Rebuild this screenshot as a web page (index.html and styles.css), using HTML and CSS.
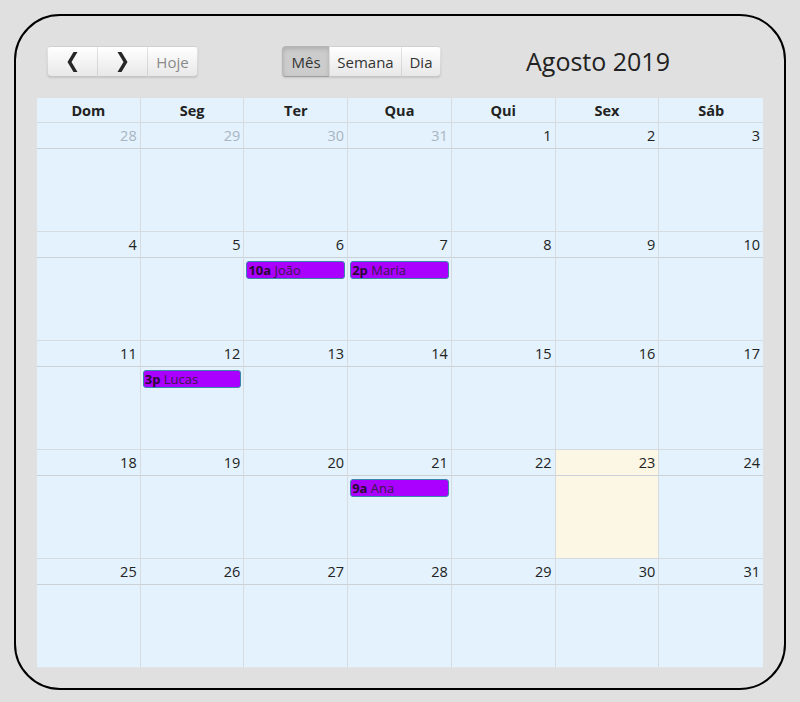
FILE: index.html
```html
<!DOCTYPE html>
<html lang="pt">
<head>
<meta charset="utf-8">
<title>Calendário</title>
<link rel="stylesheet" href="styles.css">
</head>
<body>
<div class="frame">
  <div class="toolbar">
    <div class="btn-group nav-group">
      <button class="btn btn-icon" aria-label="Anterior">
        <svg width="11" height="20" viewBox="0 0 11 20"><polygon points="10.5,0 4.5,10 10.5,20 6.5,20 0.5,10 6.5,0" fill="#262626"/></svg>
      </button>
      <button class="btn btn-icon" aria-label="Próximo">
        <svg width="11" height="20" viewBox="0 0 11 20"><polygon points="0.5,0 6.5,10 0.5,20 4.5,20 10.5,10 4.5,0" fill="#262626"/></svg>
      </button>
      <button class="btn btn-text disabled">Hoje</button>
    </div>
    <div class="btn-group view-group">
      <button class="btn btn-text active">Mês</button>
      <button class="btn btn-text">Semana</button>
      <button class="btn btn-text">Dia</button>
    </div>
    <h2 class="title">Agosto 2019</h2>
  </div>

  <div class="calendar">
    <div class="head">
      <div class="hcell">Dom</div><div class="hcell">Seg</div><div class="hcell">Ter</div><div class="hcell">Qua</div><div class="hcell">Qui</div><div class="hcell">Sex</div><div class="hcell">Sáb</div>
    </div>

    <div class="week">
      <div class="day other"><div class="num">28</div><div class="body"></div></div>
      <div class="day other"><div class="num">29</div><div class="body"></div></div>
      <div class="day other"><div class="num">30</div><div class="body"></div></div>
      <div class="day other"><div class="num">31</div><div class="body"></div></div>
      <div class="day"><div class="num">1</div><div class="body"></div></div>
      <div class="day"><div class="num">2</div><div class="body"></div></div>
      <div class="day"><div class="num">3</div><div class="body"></div></div>
    </div>

    <div class="week">
      <div class="day"><div class="num">4</div><div class="body"></div></div>
      <div class="day"><div class="num">5</div><div class="body"></div></div>
      <div class="day"><div class="num">6</div><div class="body"><div class="event"><b>10a</b> João</div></div></div>
      <div class="day"><div class="num">7</div><div class="body"><div class="event"><b>2p</b> Maria</div></div></div>
      <div class="day"><div class="num">8</div><div class="body"></div></div>
      <div class="day"><div class="num">9</div><div class="body"></div></div>
      <div class="day"><div class="num">10</div><div class="body"></div></div>
    </div>

    <div class="week">
      <div class="day"><div class="num">11</div><div class="body"></div></div>
      <div class="day"><div class="num">12</div><div class="body"><div class="event"><b>3p</b> Lucas</div></div></div>
      <div class="day"><div class="num">13</div><div class="body"></div></div>
      <div class="day"><div class="num">14</div><div class="body"></div></div>
      <div class="day"><div class="num">15</div><div class="body"></div></div>
      <div class="day"><div class="num">16</div><div class="body"></div></div>
      <div class="day"><div class="num">17</div><div class="body"></div></div>
    </div>

    <div class="week">
      <div class="day"><div class="num">18</div><div class="body"></div></div>
      <div class="day"><div class="num">19</div><div class="body"></div></div>
      <div class="day"><div class="num">20</div><div class="body"></div></div>
      <div class="day"><div class="num">21</div><div class="body"><div class="event"><b>9a</b> Ana</div></div></div>
      <div class="day"><div class="num">22</div><div class="body"></div></div>
      <div class="day today"><div class="num">23</div><div class="body"></div></div>
      <div class="day"><div class="num">24</div><div class="body"></div></div>
    </div>

    <div class="week last">
      <div class="day"><div class="num">25</div><div class="body"></div></div>
      <div class="day"><div class="num">26</div><div class="body"></div></div>
      <div class="day"><div class="num">27</div><div class="body"></div></div>
      <div class="day"><div class="num">28</div><div class="body"></div></div>
      <div class="day"><div class="num">29</div><div class="body"></div></div>
      <div class="day"><div class="num">30</div><div class="body"></div></div>
      <div class="day"><div class="num">31</div><div class="body"></div></div>
    </div>
  </div>
</div>
</body>
</html>
```

FILE: styles.css
```css
* { box-sizing: border-box; }

html, body {
  margin: 0;
  padding: 0;
  background: #e0e0e0;
}

body {
  font-family: "Open Sans", "Noto Sans", sans-serif;
  font-size: 15px;
  color: #222;
}

.frame {
  margin: 14px;
  width: 772px;
  height: 676px;
  border: 2px solid #000;
  border-radius: 46px;
  padding: 30px 21px 21px 21px;
}

.toolbar {
  display: flex;
  align-items: center;
  height: 31px;
  margin-bottom: 21px;
  padding-left: 10px;
}

.btn-group {
  display: flex;
  height: 31px;
  border-radius: 4px;
  box-shadow: 0 1px 2px rgba(0, 0, 0, 0.12);
}

.view-group { margin-left: 84px; }

.btn {
  height: 31px;
  margin: 0;
  border: 1px solid rgba(0, 0, 0, 0.1);
  border-bottom-color: rgba(0, 0, 0, 0.22);
  background: linear-gradient(#ffffff, #e8e8e8);
  color: #333;
  font-family: inherit;
  font-size: 15px;
  padding: 0;
  display: flex;
  align-items: center;
  justify-content: center;
}

.btn + .btn { border-left: 1px solid rgba(0, 0, 0, 0.1); margin-left: -1px; }

.btn-group .btn:first-child { border-radius: 4px 0 0 4px; }
.btn-group .btn:last-child { border-radius: 0 4px 4px 0; }

.btn-icon { width: 51px; }
.nav-group .btn-text { width: 51px; }

.view-group .btn:nth-child(1) { width: 48px; }
.view-group .btn:nth-child(2) { width: 73px; }
.view-group .btn:nth-child(3) { width: 40px; }

.btn.disabled { color: #8a8a8a; }

.btn.active {
  background: #cccccc;
  box-shadow: inset 0 2px 4px rgba(0, 0, 0, 0.15);
  color: #333;
}

.title {
  margin: 0 0 0 85px;
  font-weight: 400;
  font-size: 25px;
  color: #222;
  line-height: 31px;
}

.calendar {
  width: 726px;
  background: #e3f2fd;
}

.head {
  display: grid;
  grid-template-columns: repeat(7, 1fr);
  border-bottom: 1px solid #d6dadd;
}

.hcell {
  height: 24px;
  line-height: 25px;
  text-align: center;
  font-weight: 700;
  font-size: 14.5px;
  color: #222;
  border-right: 1px solid #d8dbde;
}

.hcell:last-child { border-right: 0; }

.week {
  display: grid;
  grid-template-columns: repeat(7, 1fr);
  height: 109px;
  border-bottom: 1px solid #d8dbde;
}

.week.last { border-bottom: 1px solid #e0e4e8; }

.day {
  display: flex;
  flex-direction: column;
  min-width: 0;
  border-right: 1px solid #d8dbde;
}

.day:last-child { border-right: 0; }

.num {
  height: 26px;
  border-bottom: 1px solid #c9d0d6;
  text-align: right;
  padding: 2px 3px 0 0;
  line-height: 22px;
  font-size: 14.5px;
  color: #222;
}

.other .num { color: #a9b5c1; }

.body { flex: 1; padding: 3px 2px 0 2px; }

.today { background: #fcf7e4; }

.event {
  height: 18px;
  background: #aa00ff;
  border: 1px solid #3a87ad;
  border-radius: 3px;
  font-size: 13px;
  line-height: 16px;
  padding-left: 1px;
  color: #3b1a4a;
  white-space: nowrap;
  overflow: hidden;
}

.event b { color: #2a0a36; font-weight: 700; }
```
